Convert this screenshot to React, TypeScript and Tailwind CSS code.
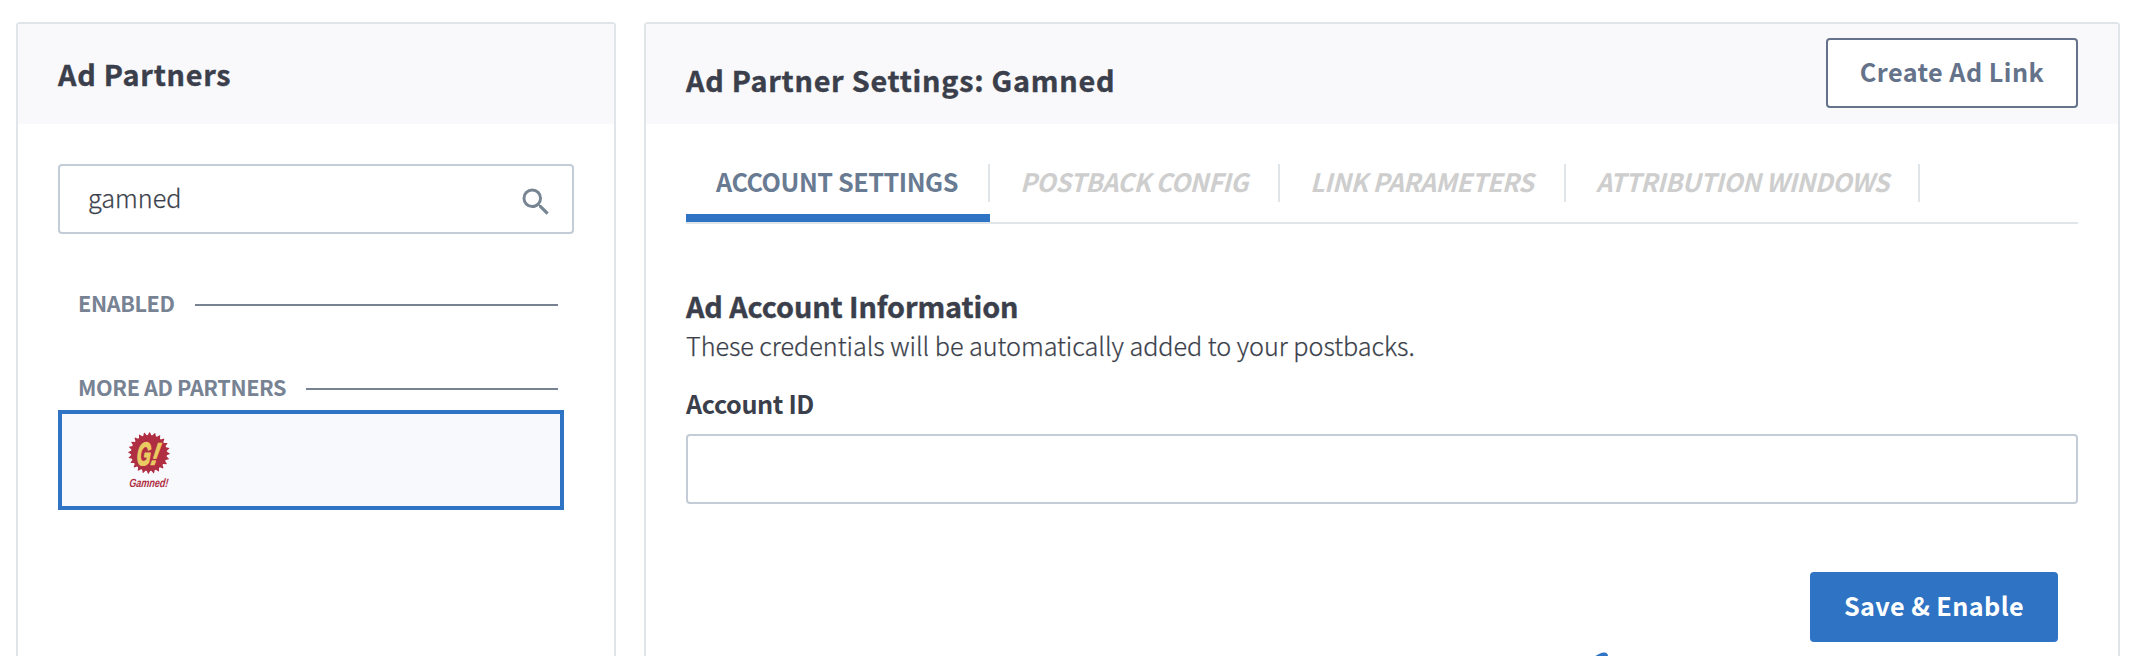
import type { ReactNode } from "react";
import { MdSearch } from "react-icons/md";

const TEETH = 24;
const gear = Array.from({ length: TEETH * 4 }, (_, i) => {
  const r = i % 4 < 2 ? 20.8 : 18;
  const spread = i % 4 === 0 ? 0.28 : i % 4 === 1 ? -0.28 : 0;
  const a = ((i + spread) / (TEETH * 4)) * Math.PI * 2 - Math.PI / 2;
  return `${(21 + r * Math.cos(a)).toFixed(2)},${(21 + r * Math.sin(a)).toFixed(2)}`;
}).join(" ");

function GamnedLogo() {
  return (
    <svg width="60" height="64" viewBox="0 0 60 64" className="overflow-visible" role="img" aria-label="Gamned!">
      <polygon points={gear} fill="#b02e42" />
      <g
        fill="#eacb62"
        stroke="#eacb62"
        strokeLinejoin="round"
        className="font-['Liberation_Sans',sans-serif] font-bold italic"
      >
        <text transform="translate(8.2 32.6) scale(0.56 1) skewX(-8)" fontSize="32" strokeWidth="1.6">
          G
        </text>
        <text transform="translate(21.6 33) scale(0.85 1) skewX(-12)" fontSize="32" strokeWidth="0.6">
          !
        </text>
      </g>
      <text
        transform="translate(1 55.4) skewX(-6)"
        fontSize="12"
        textLength="39"
        lengthAdjust="spacingAndGlyphs"
        fill="#b02e42"
        className="font-['Liberation_Sans_Narrow','Liberation_Sans',sans-serif] font-bold italic"
      >
        Gamned!
      </text>
    </svg>
  );
}

function SectionLabel({ children }: { children: ReactNode }) {
  return (
    <div className="flex h-6 items-start gap-5 pr-[10px] pl-[20px]">
      <span className="text-[21.6px] leading-6 font-bold tracking-[-0.38px] whitespace-nowrap text-[#778293]">
        {children}
      </span>
      <span className="mt-[13px] h-[2px] flex-1 bg-[#778293]" />
    </div>
  );
}

function Tab({ label, width, active = false }: { label: string; width: string; active?: boolean }) {
  return (
    <div className={`flex h-[58px] flex-col justify-between ${width}`}>
      <div className="h-[38px] border-r-2 border-[#e0e5ea] pl-[30px]">
        <span
          className={`text-[25.2px] leading-[34px] font-bold tracking-[-0.45px] whitespace-nowrap ${
            active ? "text-[#697b92]" : "text-[#cecece] italic"
          }`}
        >
          {label}
        </span>
      </div>
      {active && <div className="h-2 bg-[#2f74c4]" />}
    </div>
  );
}

export default function App() {
  return (
    <div className="relative flex h-[656px] w-[2142px] gap-[28px] overflow-hidden bg-white pt-[22px] pl-[16px] font-['Noto_Sans_CJK_JP','Noto_Sans',sans-serif] text-[#3b3f4b]">
      <aside className="h-[700px] w-[600px] shrink-0 rounded-[4px] border-2 border-[#e0e5ea]">
        <header className="flex h-[100px] items-center bg-[#f9f9fc] px-10">
          <h2 className="text-[28.8px] leading-10 font-bold tracking-[0.75px] [-webkit-text-stroke:0.4px]">
            Ad Partners
          </h2>
        </header>
        <div className="px-10 pt-10">
          <div className="flex h-[70px] items-center justify-between rounded-[4px] border-2 border-[#c3ccd7] pr-[18px] pl-[28px]">
            <span className="pb-1 text-[25.2px] leading-9 font-light [-webkit-text-stroke:0.25px]">gamned</span>
            <MdSearch className="mt-[5px] size-[36px] text-[#778593]" />
          </div>
          <div className="mt-[57px] pr-[6px]">
            <SectionLabel>ENABLED</SectionLabel>
          </div>
          <div className="mt-[60px] pr-[6px]">
            <SectionLabel>MORE AD PARTNERS</SectionLabel>
          </div>
          <div className="mt-[11px] h-[100px] w-[506px] border-4 border-[#2f74c4] bg-[#f8f9fd] pt-[18px] pl-[66px]">
            <GamnedLogo />
          </div>
        </div>
      </aside>

      <main className="h-[700px] w-[1476px] shrink-0 rounded-[4px] border-2 border-[#e0e5ea]">
        <header className="flex h-[100px] items-start justify-between bg-[#f9f9fc] px-10 pt-[14px]">
          <h2 className="mt-[22px] text-[28.8px] leading-10 font-bold tracking-[0.74px] [-webkit-text-stroke:0.4px]">
            Ad Partner Settings: Gamned
          </h2>
          <button className="flex h-[70px] w-[252px] items-center justify-center rounded-[4px] border-2 border-[#64728a] bg-white pb-1 text-[25.2px] leading-9 font-bold tracking-[0.45px] text-[#64728a]">
            Create Ad Link
          </button>
        </header>
        <div className="px-10 pt-10">
          <nav className="flex h-[60px] border-b-2 border-[#e0e5ea]">
            <Tab label="ACCOUNT SETTINGS" width="w-[304px]" active />
            <Tab label="POSTBACK CONFIG" width="w-[290px]" />
            <Tab label="LINK PARAMETERS" width="w-[286px]" />
            <Tab label="ATTRIBUTION WINDOWS" width="w-[354px]" />
          </nav>
          <h3 className="mt-[62px] text-[28.8px] leading-10 font-bold tracking-[-0.1px] [-webkit-text-stroke:0.4px]">
            Ad Account Information
          </h3>
          <p className="mt-[1px] text-[25.2px] leading-9 font-light tracking-[-0.04px] [-webkit-text-stroke:0.25px]">
            These credentials will be automatically added to your postbacks.
          </p>
          <label className="mt-[22px] block text-[25.2px] leading-9 font-bold tracking-[-0.38px]">
            Account ID
          </label>
          <div className="mt-[13px] h-[70px] rounded-[4px] border-2 border-[#c3ccd7]" />
          <div className="mt-[68px] flex justify-end pr-5">
            <button className="flex h-[70px] w-[248px] items-center justify-center rounded-[4px] bg-[#2f74c4] pb-1 text-[25.2px] leading-9 font-bold tracking-[0.4px] text-white">
              Save &amp; Enable
            </button>
          </div>
        </div>
      </main>

      <svg className="absolute bottom-0 left-[1595px]" width="14" height="4" viewBox="0 0 14 4">
        <path d="M0.5 4C3 2 6 0.6 9 0.4C11.5 0.3 13 1.8 13 4Z" fill="#2f74c4" />
      </svg>
    </div>
  );
}
